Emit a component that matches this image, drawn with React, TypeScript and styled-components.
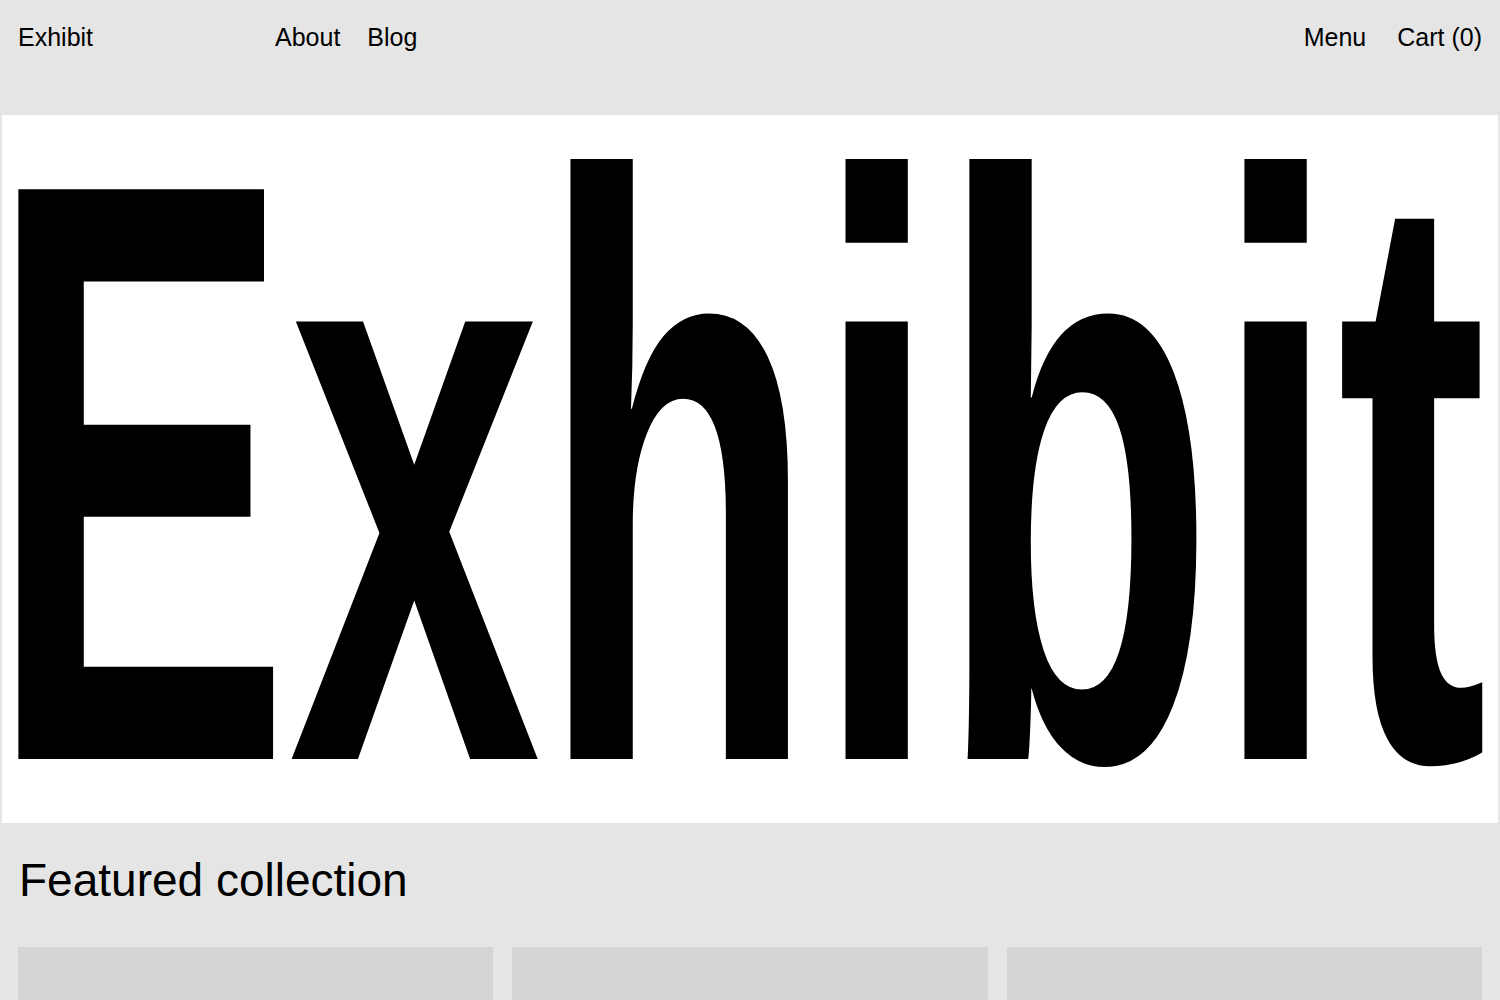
import React from 'react';
import styled, { createGlobalStyle } from 'styled-components';

const GlobalStyle = createGlobalStyle`
  html, body {
    margin: 0;
    padding: 0;
    background: #e5e5e5;
    color: #000;
    font-family: 'Liberation Sans', Arial, sans-serif;
  }
`;

const Header = styled.header`
  height: 115px;
  box-sizing: border-box;
  padding: 22px 18px 0 18px;
  display: grid;
  grid-template-columns: 257px 1fr auto;
  align-items: start;
  font-size: 25px;
  line-height: 30px;
`;

const NavGroup = styled.nav<{ $gap: number }>`
  display: flex;
  gap: ${(p) => p.$gap}px;
`;

const NavLink = styled.a`
  color: #000;
  text-decoration: none;
  cursor: pointer;
`;

const Hero = styled.section`
  margin: 0 2px;
  height: 708px;
  background: #fff;
  overflow: hidden;
`;

const HeroWord = styled.h1`
  margin: 0;
  display: inline-block;
  font-size: 200px;
  line-height: 175px;
  font-weight: 700;
  letter-spacing: -1px;
  white-space: nowrap;
  transform-origin: top left;
  transform: translate(-14px, -6px) scale(2.27, 4.14);
`;

const Section = styled.section`
  padding: 30px 18px 0 18px;
`;

const SectionTitle = styled.h2`
  margin: 0 0 40px 1px;
  font-size: 46px;
  line-height: 54px;
  font-weight: 400;
`;

const CardGrid = styled.div`
  display: grid;
  grid-template-columns: repeat(3, 1fr);
  gap: 19px;
`;

const Card = styled.div`
  height: 360px;
  background: #d4d4d4;
`;

export default function App() {
  return (
    <>
      <GlobalStyle />
      <Header>
        <NavLink>Exhibit</NavLink>
        <NavGroup $gap={27}>
          <NavLink>About</NavLink>
          <NavLink>Blog</NavLink>
        </NavGroup>
        <NavGroup $gap={31}>
          <NavLink>Menu</NavLink>
          <NavLink>Cart (0)</NavLink>
        </NavGroup>
      </Header>
      <Hero>
        <HeroWord>Exhibit</HeroWord>
      </Hero>
      <Section>
        <SectionTitle>Featured collection</SectionTitle>
        <CardGrid>
          <Card />
          <Card />
          <Card />
        </CardGrid>
      </Section>
    </>
  );
}
